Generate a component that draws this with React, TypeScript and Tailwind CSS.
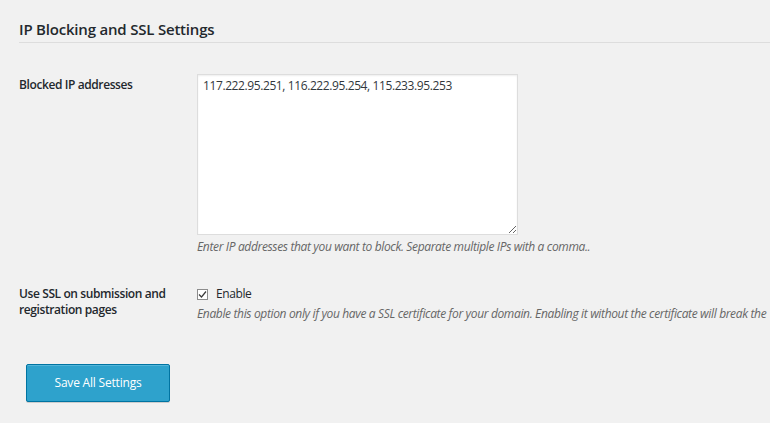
export default function App() {
  return (
    <div className="min-h-[423px] w-[770px] overflow-hidden bg-[#f1f1f1] font-['Open_Sans',sans-serif] text-[12px] tracking-[-0.4px] text-[#23282d]">
      <div className="pl-[19px] pt-[18px]">
        <h2 className="text-[15px] font-semibold leading-[22px] tracking-[-0.2px] text-[#23282d]">IP Blocking and SSL Settings</h2>
        <div className="mt-[2px] h-px bg-[#dddddd]" />
      </div>

      <div className="mt-[31px] flex pl-[19px]">
        <div className="w-[178px] shrink-0 pt-[2px] font-semibold leading-[18px]">Blocked IP addresses</div>
        <div className="min-w-0">
          <textarea
            className="block h-[161px] w-[321px] resize-y border border-[#dddddd] bg-white px-[5px] py-[2px] text-[12px] leading-[18px] tracking-[-0.4px] text-[#32373c] shadow-[inset_0_1px_2px_rgba(0,0,0,0.07)] outline-none"
            defaultValue="117.222.95.251, 116.222.95.254, 115.233.95.253"
          />
          <p className="mt-[3px] whitespace-nowrap italic leading-[18px] tracking-[-0.35px] text-[#666666]">
            Enter IP addresses that you want to block. Separate multiple IPs with a comma..
          </p>
        </div>
      </div>

      <div className="mt-[29px] flex pl-[19px]">
        <div className="w-[178px] shrink-0 pt-[1px] font-semibold leading-[16px]">
          Use SSL on submission and
          <br />
          registration pages
        </div>
        <div className="min-w-0">
          <label className="flex items-center gap-[8px] leading-[18px]">
            <span className="flex h-[11px] w-[11px] items-center justify-center border border-[#8c8c8c] bg-white">
              <svg width="9" height="9" viewBox="0 0 9 9" fill="none">
                <path d="M1 4.5 L3.5 7 L8 1.5" stroke="#3a3a3a" strokeWidth="1.2" />
              </svg>
            </span>
            <span>Enable</span>
          </label>
          <p className="mt-[2px] whitespace-nowrap italic leading-[18px] tracking-[-0.35px] text-[#666666]">
            Enable this option only if you have a SSL certificate for your domain. Enabling it without the certificate will break the
          </p>
        </div>
      </div>

      <div className="mt-[41px] pl-[26px]">
        <button className="h-[38px] w-[144px] rounded-[2px] border border-[#0074a2] bg-[#2ea2cc] text-[12px] tracking-[-0.2px] text-white shadow-[inset_0_1px_0_rgba(120,200,230,0.5),0_1px_0_rgba(0,0,0,0.15)]">
          Save All Settings
        </button>
      </div>
    </div>
  );
}
